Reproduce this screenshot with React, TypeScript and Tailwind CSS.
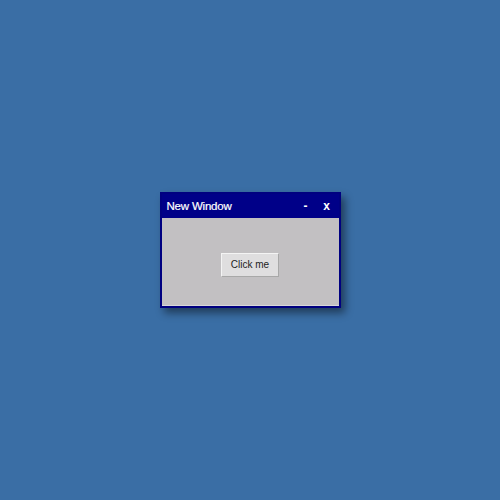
export default function App() {
  return (
    <div className="h-screen w-full flex items-center justify-center bg-[#3a6ea5]">
      <div className="w-[181px] border-2 border-[#000080] bg-[#c2c0c2] shadow-[4px_5px_8px_rgba(0,0,0,0.45)]">
        <div className="h-[24px] bg-[#000088] flex items-center justify-between pl-[5px] pr-[1px]">
          <span className="text-white text-[11.5px] tracking-[-0.2px] [-webkit-text-stroke:0.2px_white] font-['Liberation_Sans',sans-serif] leading-none pt-[1px]">
            New Window
          </span>
          <div className="flex items-center">
            <button className="w-[20px] h-[20px] text-white font-bold text-[12px] font-['Liberation_Sans',sans-serif] leading-none">
              -
            </button>
            <button className="w-[22px] h-[20px] text-white font-bold text-[12px] font-['Liberation_Sans',sans-serif] leading-none">
              x
            </button>
          </div>
        </div>
        <div className="h-[88px] flex items-center justify-center pt-[6px] border-b border-[#d8d8d8]">
          <button className="h-[24px] px-[9px] bg-[#dfdedf] border border-t-[#f4f4f4] border-l-[#f4f4f4] border-r-[#a8a8a8] border-b-[#a8a8a8] text-[10px] text-[#222] font-['Liberation_Sans',sans-serif] leading-none">
            Click me
          </button>
        </div>
      </div>
    </div>
  );
}
